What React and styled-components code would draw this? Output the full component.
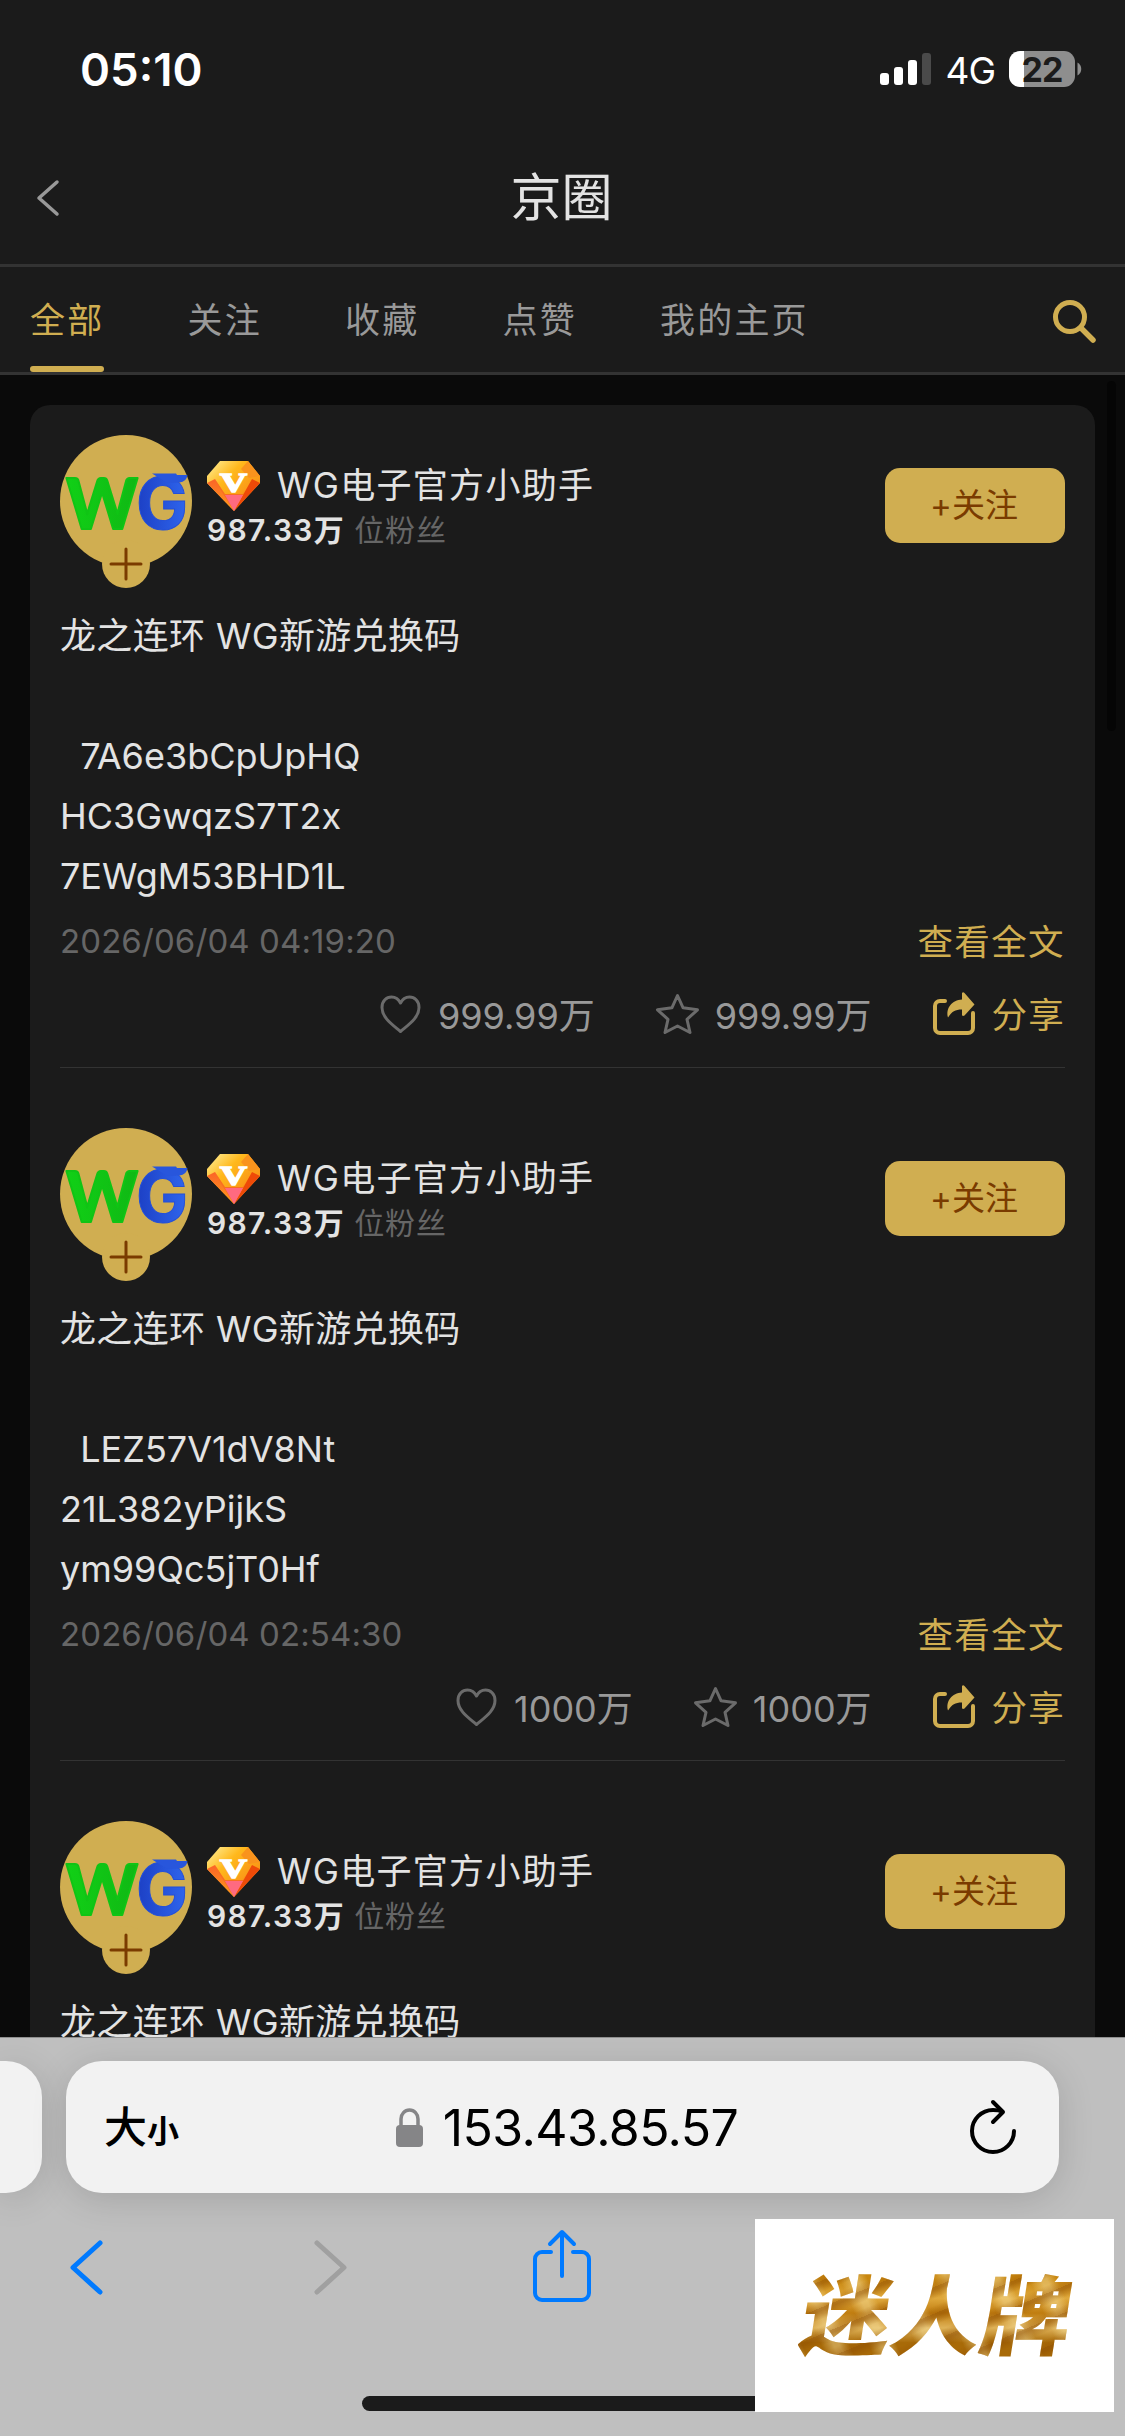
import React from "react";
import styled, { createGlobalStyle, css } from "styled-components";

const GlobalStyle = createGlobalStyle`
  * {
    box-sizing: border-box;
  }
  body {
    margin: 0;
    background: #0a0a0a;
    font-family: Inter, "Noto Sans CJK SC", sans-serif;
  }
`;

const gold = "#d0ae51";
const brown = "#7a3b00";

const Screen = styled.div`
  width: 1125px;
  height: 2436px;
  display: flex;
  flex-direction: column;
  position: relative;
  overflow: hidden;
  background: #0a0a0a;
  white-space: nowrap;
`;

/* ---------- status bar ---------- */

const StatusBar = styled.div`
  height: 138px;
  padding: 0 43px 0 80px;
  display: flex;
  align-items: center;
  justify-content: space-between;
  background: #1b1b1b;
  color: #fff;
`;

const Clock = styled.div`
  font-size: 45.5px;
  font-weight: 600;
  letter-spacing: 0;
`;

const StatusRight = styled.div`
  display: flex;
  align-items: center;
`;

const Network = styled.span`
  margin: 2px 14px 0 14px;
  font-size: 37px;
  letter-spacing: -1px;
`;

const Battery = styled.div`
  width: 66px;
  height: 36px;
  margin-right: 2px;
  border-radius: 11px;
  display: flex;
  align-items: center;
  justify-content: center;
  background: linear-gradient(90deg, #fff 15px, #8e8e8e 15px);
  color: #1b1b1b;
  font-size: 34px;
  font-weight: 700;
  letter-spacing: -1px;
`;

/* ---------- header and tabs ---------- */

const Header = styled.header`
  height: 129px;
  padding: 0 36px 6px;
  display: grid;
  grid-template-columns: 60px 1fr 60px;
  align-items: center;
  background: #1b1b1b;
  border-bottom: 3px solid #333;
`;

const Title = styled.h1`
  margin: 0 2px 0 0;
  text-align: center;
  color: #e3e3e3;
  font-size: 51px;
  line-height: 60px;
  font-weight: 400;
`;

const TabBar = styled.nav`
  height: 108px;
  padding: 0 28px 0 30px;
  display: flex;
  align-items: stretch;
  background: #1b1b1b;
  border-bottom: 3px solid #333;
`;

const Tab = styled.div`
  margin-right: 83.100px;
  padding-top: 3px;
  display: flex;
  flex-direction: column;
  align-items: center;
  color: ${(p) => (p.$active ? gold : "#999")};
  font-size: 35px;
  line-height: 100px;
  letter-spacing: 2.2px;

  ${(p) =>
    p.$active &&
    css`
      &::after {
        content: "";
        width: 100%;
        height: 6px;
        margin-top: -4px;
        border-radius: 3px;
        background: ${gold};
      }
    `}
`;

const SearchButton = styled.div`
  margin-left: auto;
  padding-top: 3px;
  display: flex;
  align-items: center;
`;

/* ---------- feed ---------- */

const Feed = styled.main`
  flex: 1;
  min-height: 0;
  padding: 30px 30px 0;
  display: flex;
  overflow: hidden;
  position: relative;
`;

const ScrollThumb = styled.div`
  position: absolute;
  top: 6px;
  right: 9px;
  width: 9px;
  height: 350px;
  border-radius: 5px;
  background: #050505;
`;

const Card = styled.div`
  flex: 1;
  height: 2200px;
  padding: 0 30px;
  border-radius: 20px;
  background: #1b1b1b;
`;

const Post = styled.article`
  height: ${(p) => (p.$first ? 663 : 693)}px;
  padding-top: ${(p) => (p.$first ? 30 : 60)}px;
  border-bottom: 1px solid #333;
`;

const PostHead = styled.div`
  height: 153px;
  display: flex;
  align-items: flex-start;
`;

const Author = styled.div`
  margin: 26px 0 0 15px;
  flex: 1;
`;

const NameRow = styled.div`
  height: 50px;
  display: flex;
  align-items: center;
`;

const Name = styled.span`
  margin: -2px 0 0 16px;
  color: #e3e3e3;
  font-size: 35px;
  line-height: 50px;
  letter-spacing: 1.3px;
`;

const Fans = styled.div`
  height: 38px;
  color: #666;
  font-size: 30px;
  line-height: 38px;
  letter-spacing: 0.8px;

  b {
    color: #e3e3e3;
    font-weight: 600;
    letter-spacing: 1.3px;
  }
`;

const FollowButton = styled.button`
  width: 180px;
  height: 75px;
  margin-top: 33px;
  padding: 0 2px 5px 0;
  border: 0;
  border-radius: 15px;
  background: ${gold};
  color: ${brown};
  font: inherit;
  font-size: 33px;
`;

const Body = styled.div`
  margin-top: 18px;
  height: 300px;
  color: #e3e3e3;
  font-size: 36px;
  line-height: 60px;
  white-space: pre;
`;

const Line = styled.div`
  height: 60px;
  letter-spacing: ${(p) => p.$spacing || 0}px;
`;

const Meta = styled.div`
  height: 70px;
  display: flex;
  align-items: center;
  justify-content: space-between;
`;

const Time = styled.span`
  color: #666;
  font-size: 33px;
  letter-spacing: 0.1px;
`;

const GoldText = styled.span`
  color: ${gold};
  font-size: 35.5px;
  letter-spacing: 1.2px;
`;

const FullTextLink = styled(GoldText)`
  padding-bottom: 3px;
  letter-spacing: 1.4px;
`;

const Actions = styled.div`
  height: 75px;
  display: flex;
  align-items: center;
  justify-content: flex-end;
`;

const Action = styled.div`
  margin-left: ${(p) => p.$gap || 0}px;
  display: flex;
  align-items: center;
  gap: 15px;
  color: #999;
  font-size: 36px;
  line-height: 44px;

  svg {
    flex: none;
  }
`;

const ActionLabel = styled.span`
  padding-top: 4px;
`;

/* ---------- browser chrome ---------- */

const BrowserBar = styled.footer`
  height: 399px;
  display: flex;
  flex-direction: column;
  border-top: 1px solid #8f8f8f;
  background: #bfbfbf;
  overflow: hidden;
`;

const AddressRow = styled.div`
  margin-top: 23px;
  height: 132px;
  display: flex;
  gap: 24px;
`;

const PreviousPage = styled.div`
  width: 42px;
  border-radius: 0 36px 36px 0;
  background: #f2f2f2;
  box-shadow: 0 6px 36px rgba(0, 0, 0, 0.14);
`;

const AddressField = styled.div`
  width: 993px;
  padding: 0 42px 0 38px;
  border-radius: 36px;
  display: grid;
  grid-template-columns: 150px 1fr 150px;
  align-items: center;
  background: #f2f2f2;
  color: #000;
  box-shadow: 0 6px 36px rgba(0, 0, 0, 0.14);
`;

const TextSize = styled.div`
  padding-top: 5px;
  display: flex;
  align-items: baseline;
  font-weight: 500;
  font-size: 43px;
  line-height: 50px;

  small {
    font-size: 32px;
    font-weight: 700;
  }
`;

const Url = styled.div`
  padding: 2px 0 0 13px;
  display: flex;
  align-items: center;
  justify-content: center;
  gap: 19px;
  font-size: 50px;
  letter-spacing: -0.6px;
`;

const Reload = styled.div`
  display: flex;
  justify-content: flex-end;
`;

const Toolbar = styled.div`
  margin-top: 31px;
  height: 84px;
  padding-left: 70px;
  display: flex;
  align-items: center;
`;

const Tool = styled.div`
  width: ${(p) => p.$width}px;
  padding-top: ${(p) => p.$drop || 0}px;
  display: flex;
`;

const HomeIndicator = styled.div`
  width: 402px;
  height: 15px;
  margin: 88px auto 0;
  border-radius: 8px;
  background: #1b1b1b;
`;

const Watermark = styled.div`
  position: absolute;
  left: 755px;
  top: 2219px;
  width: 359px;
  height: 193px;
  padding: 0 0 9px 6px;
  display: flex;
  align-items: center;
  justify-content: center;
  background: #fff;
`;

const GoldLogo = styled.span`
  font-family: "Noto Sans CJK SC", sans-serif;
  font-size: 90px;
  font-weight: 900;
  line-height: 110px;
  transform: skewX(-9deg) scaleY(0.96);
  color: transparent;
  background:
    repeating-linear-gradient(155deg, rgba(140, 75, 0, 0.5) 0 3px, rgba(255, 226, 140, 0) 12px 19px, rgba(150, 82, 0, 0.35) 27px),
    repeating-linear-gradient(60deg, rgba(255, 240, 180, 0.4) 0 5px, rgba(255, 226, 140, 0) 14px 30px, rgba(255, 240, 180, 0.4) 41px),
    linear-gradient(180deg, #c8860f 20%, #dfa83c 38%, #c07d10 52%, #dfb258 66%, #a86a08 80%);
  background-clip: text;
  -webkit-background-clip: text;
`;

/* ---------- icons ---------- */

const SignalIcon = () => (
  <svg width="51" height="34" viewBox="0 0 51 34" fill="#fff">
    <rect x="0" y="21" width="9" height="12" rx="3" />
    <rect x="14" y="15" width="9" height="18" rx="3" />
    <rect x="28" y="8" width="9" height="25" rx="3" />
    <rect x="42" y="1" width="9" height="32" rx="3" fill="#4a4a4a" />
  </svg>
);

const BatteryTip = () => (
  <svg width="5" height="14" viewBox="0 0 5 14">
    <path d="M0.500 0.500c5 2.500 5 10.500 0 13z" fill="#8e8e8e" />
  </svg>
);

const Chevron = ({ width, height, color, stroke, flip }) => (
  <svg width={width} height={height} viewBox={`0 0 ${width} ${height}`} fill="none">
    <path
      d={
        flip
          ? `M3 3L${width - 3} ${height / 2}L3 ${height - 3}`
          : `M${width - 3} 3L3 ${height / 2}L${width - 3} ${height - 3}`
      }
      stroke={color}
      strokeWidth={stroke}
      strokeLinecap="round"
      strokeLinejoin="round"
    />
  </svg>
);

const SearchIcon = () => (
  <svg width="45" height="45" viewBox="0 0 45 45" fill="none" stroke={gold} strokeLinecap="round">
    <circle cx="18" cy="18" r="14.500" strokeWidth="5" />
    <path d="M29 29L41 41" strokeWidth="5.500" />
  </svg>
);

const Avatar = () => (
  <svg width="132" height="153" viewBox="0 0 132 153">
    <defs>
      <linearGradient id="wgGreen" x1="0" x2="1">
        <stop offset="0" stopColor="#11d016" />
        <stop offset="1" stopColor="#10b814" />
      </linearGradient>
      <linearGradient id="wgBlue" x1="0" x2="1">
        <stop offset="0" stopColor="#1c3fc4" />
        <stop offset="1" stopColor="#2f66ee" />
      </linearGradient>
    </defs>
    <circle cx="66" cy="66" r="66" fill={gold} />
    <circle cx="66" cy="129" r="24" fill={gold} />
    <text
      x="6"
      y="93.500"
      fontFamily="Lato, sans-serif"
      fontWeight="900"
      fontSize="71"
      textLength="72"
      lengthAdjust="spacingAndGlyphs"
      fill="url(#wgGreen)"
      stroke="#10c415"
      strokeWidth="2"
      strokeLinejoin="round"
    >
      W
    </text>
    <text
      x="76"
      y="94"
      fontFamily="Inter, sans-serif"
      fontWeight="700"
      fontSize="71"
      textLength="52"
      lengthAdjust="spacingAndGlyphs"
      fill="url(#wgBlue)"
      stroke="#2450d8"
      strokeWidth="1"
    >
      G
    </text>
    <path d="M92 38.500h24l1 1.500h10.500q-1 7-8 7.500l-12 .5z" fill="#2856dc" />
    <path d="M66 114v30M51 129h30" stroke={brown} strokeWidth="3" strokeLinecap="round" />
  </svg>
);

const GemIcon = () => (
  <svg width="54" height="50" viewBox="0 0 54 50">
    <defs>
      <linearGradient id="gemTop" x1="0" y1="0" x2="1" y2="1">
        <stop offset="0" stopColor="#fff3a0" />
        <stop offset="0.350" stopColor="#ffb81c" />
        <stop offset="1" stopColor="#f57a12" />
      </linearGradient>
      <linearGradient id="gemLeft" x1="0" y1="0" x2="0" y2="1">
        <stop offset="0" stopColor="#fb6428" />
        <stop offset="1" stopColor="#ff9a1a" />
      </linearGradient>
    </defs>
    <path d="M13 0h28l12 15v7L27 50 0 22v-7z" fill="url(#gemTop)" />
    <path d="M0 22l8-4 19 32z" fill="url(#gemLeft)" />
    <path d="M53 22l-8-4-18 32z" fill="#ee4a08" />
    <path d="M8 18l5 10 14 22 12-22 6-10-9 15H18z" fill="#f96f22" />
    <path d="M18 34h18l-9 16z" fill="#ff6a80" />
    <path d="M41 0l12 15-11 2-8-9z" fill="#f9931d" />
    <text
      x="13"
      y="31"
      fontFamily="Liberation Serif, serif"
      fontWeight="700"
      fontSize="27"
      textLength="27"
      lengthAdjust="spacingAndGlyphs"
      fill="#fff"
      stroke="#fff"
      strokeWidth="1.500"
    >
      V
    </text>
  </svg>
);

const HeartIcon = () => (
  <svg width="45" height="45" viewBox="0 0 45 45" fill="none" stroke="#6b6b6b" strokeWidth="3" strokeLinejoin="round">
    <path d="M22.500 40.500C15 34 4 27 4 16.500C4 10 8.500 6 13.500 6c4 0 7 2 9 6 2-4 5-6 9-6C36.500 6 41 10 41 16.500C41 27 30 34 22.500 40.500z" />
  </svg>
);

const StarIcon = () => (
  <svg width="45" height="45" viewBox="0 0 45 45" fill="none" stroke="#6b6b6b" strokeWidth="3" strokeLinejoin="round">
    <path d="M22.500 4.500l5.600 12.300 14.400 2-10.500 9.500 3 13.200-12.500-6.500-12.500 6.500 3-13.200-10.500-9.500 14.400-2z" />
  </svg>
);

const ShareIcon = () => (
  <svg width="45" height="45" viewBox="0 0 45 45">
    <path d="M13 10H8a5 5 0 0 0-5 5v22a5 5 0 0 0 5 5H36a5 5 0 0 0 5-5V22" fill="none" stroke={gold} strokeWidth="4" strokeLinecap="round" />
    <path d="M30 2q1-1.500 2.500 0L42.500 13.500 32.500 24.500q-2 1-2.500-0.500v-5.500c-7 0-10 2-14 8C13.500 17 20 9 30 8.500z" fill={gold} />
  </svg>
);

const LockIcon = () => (
  <svg width="28" height="40" viewBox="0 0 28 40">
    <rect x="0" y="17" width="27" height="22" rx="4" fill="#858587" />
    <path d="M5 18V11a8.500 9 0 0 1 17 0v7" fill="none" stroke="#858587" strokeWidth="3.500" />
  </svg>
);

const ReloadIcon = () => (
  <svg width="48" height="56" viewBox="0 0 48 56" fill="none" stroke="#000" strokeWidth="4" strokeLinecap="round" strokeLinejoin="round">
    <path d="M45 32a21 21 0 1 1-21-21c4 0 7 .5 9 1.500" />
    <path d="M24 3l10 10-10 10" />
  </svg>
);

const ShareUpIcon = () => (
  <svg width="60" height="74" viewBox="0 0 60 74" fill="none" stroke="#007aff" strokeWidth="4" strokeLinecap="round" strokeLinejoin="round">
    <path d="M19 23H10a7 7 0 0 0-7 7v34a7 7 0 0 0 7 7h40a7 7 0 0 0 7-7V30a7 7 0 0 0-7-7h-9" />
    <path d="M30 47V4M18 15L30 3l12 12" />
  </svg>
);

/* ---------- page ---------- */

const tabs = ["全部", "关注", "收藏", "点赞", "我的主页"];

const posts = [
  {
    codes: ["  7A6e3bCpUpHQ", "HC3GwqzS7T2x", "7EWgM53BHD1L"],
    time: "2026/06/04 04:19:20",
    likes: "999.99万",
    stars: "999.99万",
  },
  {
    codes: ["  LEZ57V1dV8Nt", "21L382yPijkS", "ym99Qc5jT0Hf"],
    time: "2026/06/04 02:54:30",
    likes: "1000万",
    stars: "1000万",
  },
  {
    codes: [],
    time: "",
    likes: "",
    stars: "",
  },
];

function PostItem({ post, first }) {
  return (
    <Post $first={first}>
      <PostHead>
        <Avatar />
        <Author>
          <NameRow>
            <GemIcon />
            <Name>WG电子官方小助手</Name>
          </NameRow>
          <Fans>
            <b>987.33万</b> 位粉丝
          </Fans>
        </Author>
        <FollowButton>+关注</FollowButton>
      </PostHead>
      <Body>
        <Line $spacing={0.35}>龙之连环 WG新游兑换码</Line>
        <Line />
        {post.codes.map((code) => (
          <Line key={code}>{code}</Line>
        ))}
      </Body>
      {post.time && (
        <>
          <Meta>
            <Time>{post.time}</Time>
            <FullTextLink>查看全文</FullTextLink>
          </Meta>
          <Actions>
            <Action>
              <HeartIcon />
              <ActionLabel>{post.likes}</ActionLabel>
            </Action>
            <Action $gap={60}>
              <StarIcon />
              <ActionLabel>{post.stars}</ActionLabel>
            </Action>
            <Action $gap={60}>
              <ShareIcon />
              <ActionLabel>
                <GoldText>分享</GoldText>
              </ActionLabel>
            </Action>
          </Actions>
        </>
      )}
    </Post>
  );
}

function App() {
  return (
    <Screen>
      <GlobalStyle />
      <StatusBar>
        <Clock>05:10</Clock>
        <StatusRight>
          <SignalIcon />
          <Network>4G</Network>
          <Battery>22</Battery>
          <BatteryTip />
        </StatusRight>
      </StatusBar>
      <Header>
        <Chevron width={24} height={38} color="#999" stroke={3.5} />
        <Title>京圈</Title>
      </Header>
      <TabBar>
        {tabs.map((tab, i) => (
          <Tab key={tab} $active={i === 0}>
            {tab}
          </Tab>
        ))}
        <SearchButton>
          <SearchIcon />
        </SearchButton>
      </TabBar>
      <Feed>
        <Card>
          {posts.map((post, i) => (
            <PostItem key={i} post={post} first={i === 0} />
          ))}
        </Card>
        <ScrollThumb />
      </Feed>
      <BrowserBar>
        <AddressRow>
          <PreviousPage />
          <AddressField>
            <TextSize>
              大<small>小</small>
            </TextSize>
            <Url>
              <LockIcon />
              153.43.85.57
            </Url>
            <Reload>
              <ReloadIcon />
            </Reload>
          </AddressField>
        </AddressRow>
        <Toolbar>
          <Tool $width={244} $drop={3}>
            <Chevron width={33} height={55} color="#007aff" stroke={5} />
          </Tool>
          <Tool $width={218} $drop={3}>
            <Chevron width={33} height={55} color="#a0a0a0" stroke={5} flip />
          </Tool>
          <Tool $width={60}>
            <ShareUpIcon />
          </Tool>
        </Toolbar>
        <HomeIndicator />
      </BrowserBar>
      <Watermark>
        <GoldLogo>迷人牌</GoldLogo>
      </Watermark>
    </Screen>
  );
}

export default App;
